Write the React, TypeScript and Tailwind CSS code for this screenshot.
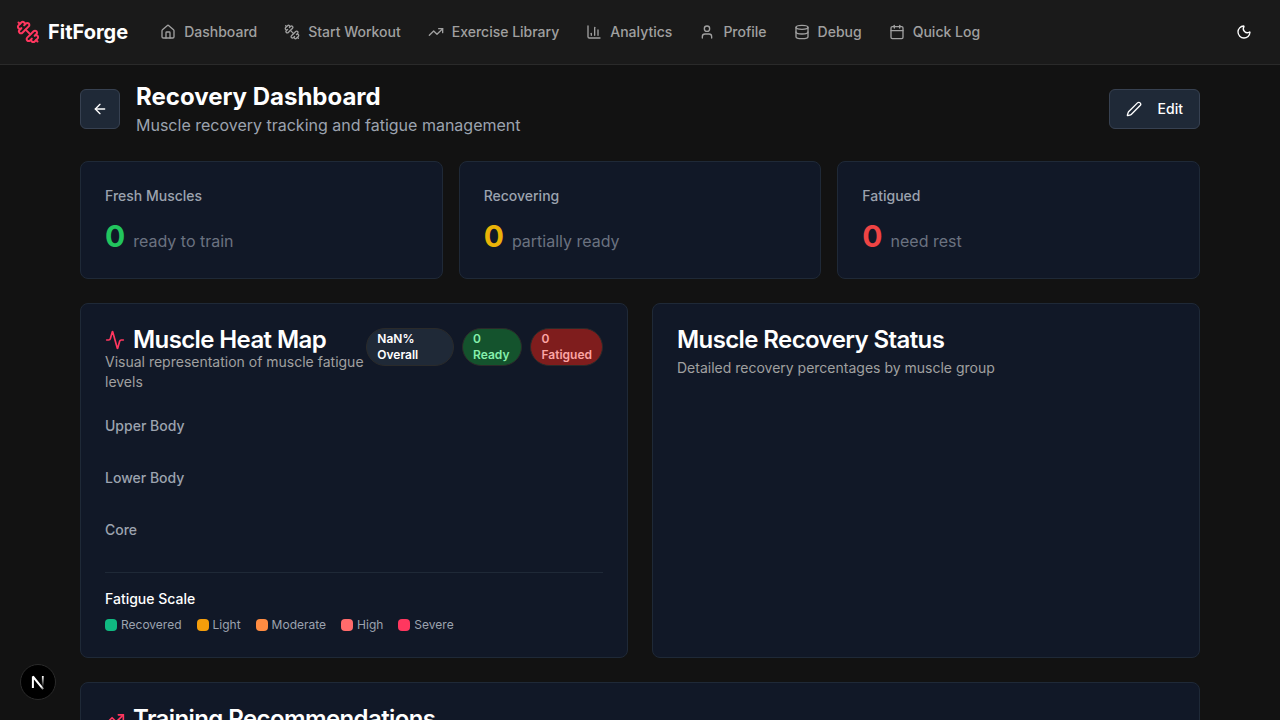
import React from "react";
import {
  Activity,
  ArrowLeft,
  Calendar,
  ChartColumn,
  Database,
  House,
  Moon,
  Pen,
  TrendingUp,
  User,
} from "lucide-react";

type IconType = React.ComponentType<{ className?: string }>;

function Dumbbell({ className }: { className?: string }) {
  return (
    <svg
      viewBox="0 0 24 24"
      className={className}
      fill="none"
      stroke="currentColor"
      strokeWidth="2"
      strokeLinecap="round"
      strokeLinejoin="round"
      aria-hidden="true"
    >
      <path d="M14.4 14.4 9.6 9.6" />
      <path d="M18.657 21.485a2 2 0 1 1-2.829-2.828l-1.767 1.768a2 2 0 1 1-2.829-2.829l6.364-6.364a2 2 0 1 1 2.829 2.829l-1.768 1.767a2 2 0 1 1 2.828 2.829z" />
      <path d="m21.5 21.5-1.4-1.4" />
      <path d="M3.9 3.9 2.5 2.5" />
      <path d="M6.404 12.768a2 2 0 1 1-2.829-2.829l1.768-1.767a2 2 0 1 1-2.828-2.829l2.828-2.828a2 2 0 1 1 2.829 2.828l1.767-1.768a2 2 0 1 1 2.829 2.829z" />
    </svg>
  );
}

const links: { label: string; icon: IconType }[] = [
  { label: "Dashboard", icon: House },
  { label: "Start Workout", icon: Dumbbell },
  { label: "Exercise Library", icon: TrendingUp },
  { label: "Analytics", icon: ChartColumn },
  { label: "Profile", icon: User },
  { label: "Debug", icon: Database },
  { label: "Quick Log", icon: Calendar },
];

const stats = [
  { label: "Fresh Muscles", value: 0, note: "ready to train", color: "text-[#22c55e]" },
  { label: "Recovering", value: 0, note: "partially ready", color: "text-[#eab308]" },
  { label: "Fatigued", value: 0, note: "need rest", color: "text-[#ef4444]" },
];

const scale = [
  { label: "Recovered", color: "bg-[#10b981]" },
  { label: "Light", color: "bg-[#f59e0b]" },
  { label: "Moderate", color: "bg-[#ff8c42]" },
  { label: "High", color: "bg-[#ff6b6b]" },
  { label: "Severe", color: "bg-[#ff375f]" },
];

function Card({ children }: { children: React.ReactNode }) {
  return <section className="rounded-lg border border-[#1f2937] bg-[#111827] p-6">{children}</section>;
}

function CardTitle({ icon: Icon, children }: { icon?: IconType; children: React.ReactNode }) {
  return (
    <h2 className="flex items-center gap-2 text-2xl leading-none font-semibold tracking-tight text-white">
      {Icon && <Icon className="size-5 shrink-0 text-[#ff375f]" />}
      {children}
    </h2>
  );
}

function Badge({ children, className }: { children: React.ReactNode; className: string }) {
  return (
    <div
      className={`inline-flex items-center rounded-full border border-[#2a2a2a] px-2.5 py-0.5 text-xs font-semibold ${className}`}
    >
      {children}
    </div>
  );
}

export default function App() {
  return (
    <div className="min-h-screen bg-[#121212] font-['Inter',sans-serif] text-white">
      <header className="border-b border-[#2a2a2a] bg-[#1a1a1a]">
        <div className="flex h-16 items-center px-4">
          <a href="#" className="mr-8 flex items-center gap-2">
            <Dumbbell className="size-6 text-[#ff375f]" />
            <span className="text-xl font-bold">FitForge</span>
          </a>
          <nav className="flex items-center gap-[27px]">
            {links.map(({ label, icon: Icon }) => (
              <a
                key={label}
                href="#"
                className="flex items-center gap-2 text-sm font-medium whitespace-nowrap text-[#a0a0a0]"
              >
                <Icon className="size-4" />
                {label}
              </a>
            ))}
          </nav>
          <button type="button" aria-label="Toggle theme" className="ml-auto flex size-10 items-center justify-center">
            <Moon className="size-4" />
          </button>
        </div>
      </header>

      <main className="mx-auto flex max-w-6xl flex-col gap-6 p-4">
        <div className="flex items-center justify-between">
          <div className="flex items-center gap-4">
            <button
              type="button"
              aria-label="Go back"
              className="flex size-10 items-center justify-center rounded-md border border-[#374151] bg-[#1f2937]"
            >
              <ArrowLeft className="size-4" />
            </button>
            <div>
              <h1 className="text-2xl font-bold">Recovery Dashboard</h1>
              <p className="text-base text-[#9ca3af]">Muscle recovery tracking and fatigue management</p>
            </div>
          </div>
          <button
            type="button"
            className="flex h-10 items-center gap-4 rounded-md border border-[#374151] bg-[#1f2937] px-4 text-sm font-medium"
          >
            <Pen className="size-4" />
            Edit
          </button>
        </div>

        <div className="grid grid-cols-3 gap-4">
          {stats.map((stat) => (
            <Card key={stat.label}>
              <h3 className="text-sm font-medium text-[#9ca3af]">{stat.label}</h3>
              <div className="mt-3 flex items-baseline gap-2">
                <span className={`text-3xl font-bold ${stat.color}`}>{stat.value}</span>
                <span className="text-base text-[#6b7280]">{stat.note}</span>
              </div>
            </Card>
          ))}
        </div>

        <div className="grid grid-cols-2 gap-6">
          <Card>
            <div className="flex items-start justify-between">
              <div>
                <CardTitle icon={Activity}>Muscle Heat Map</CardTitle>
                <p className="text-sm text-[#a0a0a0]">Visual representation of muscle fatigue levels</p>
              </div>
              <div className="flex gap-2">
                <Badge className="bg-[#1f2937] text-white">NaN% Overall</Badge>
                <Badge className="bg-[#14532d] text-[#86efac]">0 Ready</Badge>
                <Badge className="bg-[#7f1d1d] text-[#fca5a5]">0 Fatigued</Badge>
              </div>
            </div>
            <div className="mt-6 flex flex-col gap-8 pb-8 text-sm font-medium text-[#9ca3af]">
              <h3>Upper Body</h3>
              <h3>Lower Body</h3>
              <h3>Core</h3>
            </div>
            <div className="border-t border-[#1f2937] pt-4">
              <h3 className="text-sm font-medium">Fatigue Scale</h3>
              <ul className="mt-2 flex items-center gap-[15px] text-xs text-[#9ca3af]">
                {scale.map((step) => (
                  <li key={step.label} className="flex items-center gap-1">
                    <span className={`size-3 rounded ${step.color}`} />
                    {step.label}
                  </li>
                ))}
              </ul>
            </div>
          </Card>

          <Card>
            <CardTitle>Muscle Recovery Status</CardTitle>
            <p className="mt-1.5 text-sm text-[#a0a0a0]">Detailed recovery percentages by muscle group</p>
          </Card>
        </div>

        <Card>
          <CardTitle icon={TrendingUp}>Training Recommendations</CardTitle>
        </Card>
      </main>

      <button
        type="button"
        aria-label="Open developer tools"
        className="fixed bottom-5 left-5 flex size-9 items-center justify-center rounded-full border border-[#2b2b2b] bg-black"
      >
        <svg viewBox="0 0 36 36" className="size-9 shrink-0" fill="none">
          <defs>
            <linearGradient id="stem" x1="0" y1="12" x2="0" y2="23" gradientUnits="userSpaceOnUse">
              <stop stopColor="white" />
              <stop offset="1" stopColor="white" stopOpacity="0" />
            </linearGradient>
            <linearGradient id="slant" x1="17" y1="17" x2="24" y2="26" gradientUnits="userSpaceOnUse">
              <stop offset="0.6" stopColor="white" />
              <stop offset="1" stopColor="white" stopOpacity="0.3" />
            </linearGradient>
          </defs>
          <path d="M23.2 25.2 12.9 12.5V24" stroke="url(#slant)" strokeWidth="2" strokeLinejoin="bevel" />
          <path d="M22.8 12V23" stroke="url(#stem)" strokeWidth="1.8" />
        </svg>
      </button>
    </div>
  );
}
